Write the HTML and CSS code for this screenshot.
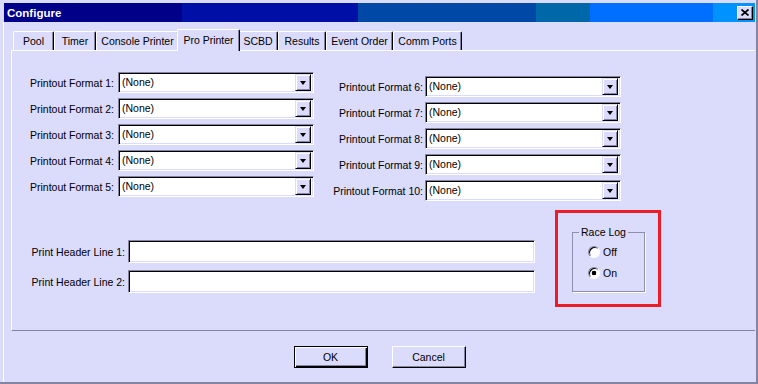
FILE: index.html
```html
<!DOCTYPE html>
<html lang="en">
<head>
<meta charset="UTF-8">
<title>Configure</title>
<link rel="stylesheet" href="styles.css">
</head>
<body>
<div class="window">
    <div class="titlebar">
        <span class="title">Configure</span>
        <button class="close-btn" aria-label="Close">
            <svg width="8" height="7" viewBox="0 0 8 7"><path d="M0.5 0.5 L7.5 6.5 M7.5 0.5 L0.5 6.5" stroke="#000" stroke-width="1.7" fill="none"/></svg>
        </button>
    </div>
    <div class="client">
        <ul class="tabs">
            <li class="tab">Pool</li>
            <li class="tab">Timer</li>
            <li class="tab">Console Printer</li>
            <li class="tab active">Pro Printer</li>
            <li class="tab">SCBD</li>
            <li class="tab">Results</li>
            <li class="tab">Event Order</li>
            <li class="tab">Comm Ports</li>
        </ul>
        <div class="panel">
            <div class="formats">
                <div class="fmt-col">
                    <label>Printout Format 1:</label>
                    <div class="combo"><span class="combo-text">(None)</span><span class="drop"></span></div>
                    <label>Printout Format 2:</label>
                    <div class="combo"><span class="combo-text">(None)</span><span class="drop"></span></div>
                    <label>Printout Format 3:</label>
                    <div class="combo"><span class="combo-text">(None)</span><span class="drop"></span></div>
                    <label>Printout Format 4:</label>
                    <div class="combo"><span class="combo-text">(None)</span><span class="drop"></span></div>
                    <label>Printout Format 5:</label>
                    <div class="combo"><span class="combo-text">(None)</span><span class="drop"></span></div>
                </div>
                <div class="fmt-col right">
                    <label>Printout Format 6:</label>
                    <div class="combo"><span class="combo-text">(None)</span><span class="drop"></span></div>
                    <label>Printout Format 7:</label>
                    <div class="combo"><span class="combo-text">(None)</span><span class="drop"></span></div>
                    <label>Printout Format 8:</label>
                    <div class="combo"><span class="combo-text">(None)</span><span class="drop"></span></div>
                    <label>Printout Format 9:</label>
                    <div class="combo"><span class="combo-text">(None)</span><span class="drop"></span></div>
                    <label>Printout Format 10:</label>
                    <div class="combo"><span class="combo-text">(None)</span><span class="drop"></span></div>
                </div>
            </div>
            <div class="lower">
                <div class="headers">
                    <label>Print Header Line 1:</label>
                    <div class="textbox"></div>
                    <label>Print Header Line 2:</label>
                    <div class="textbox"></div>
                </div>
                <div class="highlight">
                    <fieldset class="group">
                        <legend>Race Log</legend>
                        <div class="radio"><span class="circle"></span>Off</div>
                        <div class="radio"><span class="circle checked"></span>On</div>
                    </fieldset>
                </div>
            </div>
        </div>
        <div class="buttons">
            <button class="btn default">OK</button>
            <button class="btn">Cancel</button>
        </div>
    </div>
</div>
</body>
</html>
```

FILE: styles.css
```css
* {
    box-sizing: border-box;
}
body {
    margin: 0;
    background-color: #dbdbfb; /* dialog face */
    font-family: "Liberation Sans", Arial, sans-serif;
    font-size: 10.5px;
    color: #000;
}
.window {
    width: 758px;
    height: 384px;
    padding: 3px 1px 0 3px;
    border-right: 2px solid #8585a2;
    border-bottom: 2px solid #8585a2;
    display: flex;
    flex-direction: column;
}

/* title bar */
.titlebar {
    height: 19px;
    margin-left: 1px;
    padding: 0 2px 0 3px;
    display: flex;
    align-items: center;
    justify-content: space-between;
    background: linear-gradient(to right,
        #000088 0 178px,
        #0010a6 178px 354px,
        #0048a6 354px 532px,
        #0068a8 532px 586px,
        #006eff 586px 709px,
        #0092ff 709px);
}
.title {
    color: #fff;
    font-weight: bold;
    font-size: 11.5px;
}
.close-btn {
    width: 16px;
    height: 14px;
    padding: 0;
    background: #dbdbfb;
    border: 1px solid;
    border-color: #fff #000 #000 #fff;
    box-shadow: inset -1px -1px #8585a2;
    display: flex;
    align-items: center;
    justify-content: center;
}

/* client area */
.client {
    flex: 1;
    border-left: 1px solid #fff;
    display: flex;
    flex-direction: column;
}
.tabs {
    list-style: none;
    margin: 7px 0 0;
    padding: 0 0 0 9px;
    height: 21px;
    display: grid;
    grid-template-columns: 41px 42px 83px 59px 40px 48px 67px 69px;
    align-items: end;
}
.tab {
    height: 19px;
    line-height: 18px;
    text-align: center;
    white-space: nowrap;
    border-top: 1px solid #fff;
    border-left: 1px solid #fff;
    border-right: 1px solid #000;
    border-radius: 2px 2px 0 0;
    box-shadow: inset -1px 0 #8585a2;
}
.tab.active {
    position: relative;
    z-index: 1;
    height: 22px;
    line-height: 20px;
    margin: 0 -2px -1px;
    background: #dbdbfb;
}
.panel {
    height: 281px;
    margin-left: 7px;
    border-top: 1px solid #fff;
    border-left: 1px solid #fff;
    border-bottom: 1px solid #8585a2;
    padding-top: 21px;
}

/* printout formats */
.formats {
    display: flex;
    align-items: flex-start;
    padding-left: 2px;
}
.fmt-col {
    display: grid;
    grid-template-columns: 100px 196px;
    grid-auto-rows: 21px;
    column-gap: 4px;
    row-gap: 5px;
    align-items: center;
}
.fmt-col.right {
    margin: 4px 0 0 1px;
    grid-template-columns: 108px 196px;
    column-gap: 2px;
}
.fmt-col label,
.headers label {
    text-align: right;
    white-space: nowrap;
}
.combo,
.textbox {
    height: 21px;
    background: #fff;
    border: 1px solid;
    border-color: #8585a2 #fff #fff #8585a2;
    box-shadow: inset 1px 1px #000, inset -1px -1px #dbdbfb;
}
.combo {
    display: flex;
    padding: 1px 2px 1px 2px;
}
.combo-text {
    flex: 1;
    padding-left: 1px;
    line-height: 17px;
}
.drop {
    width: 16px;
    height: 17px;
    background: #dbdbfb;
    border: 1px solid;
    border-color: #dbdbfb #000 #000 #dbdbfb;
    box-shadow: inset 1px 1px #fff, inset -1px -1px #8585a2;
    display: flex;
    align-items: center;
    justify-content: center;
}
.drop::after {
    content: "";
    border-left: 3.5px solid transparent;
    border-right: 3.5px solid transparent;
    border-top: 4px solid #000;
}

/* header lines and race log */
.lower {
    display: flex;
    align-items: flex-start;
    margin-top: 9px;
}
.headers {
    margin-top: 30px;
    padding-left: 13px;
    display: grid;
    grid-template-columns: 100px 407px;
    grid-auto-rows: 23px;
    column-gap: 3px;
    row-gap: 7px;
    align-items: center;
}
.textbox {
    height: 23px;
}
.highlight {
    width: 106px;
    height: 97px;
    margin-left: 20px;
    border: 3px solid #ec1c24; /* red marker */
}
.group {
    width: 73px;
    height: 66px;
    margin: 13px 0 0 14px;
    padding: 3px 0 0;
    min-width: 0;
    border: 1px solid #8f8fac;
    box-shadow: 1px 1px 0 #fff;
}
.group legend {
    margin-left: 6px;
    padding: 0 2px;
    line-height: 12px;
}
.radio {
    height: 21px;
    padding-left: 15px;
    display: flex;
    align-items: center;
    gap: 3px;
}
.circle {
    width: 12px;
    height: 12px;
    border-radius: 50%;
    border: 1px solid;
    border-color: #8585a2 #fff #fff #8585a2;
    box-shadow: inset 1px 1px #000;
    background: #fff;
}
.circle.checked {
    background: radial-gradient(circle, #000 0 2px, #fff 2.6px);
}

/* dialog buttons */
.buttons {
    margin-top: 15px;
    display: flex;
    justify-content: center;
    gap: 24px;
}
.btn {
    width: 74px;
    height: 22px;
    padding: 0;
    font-family: "Liberation Sans", Arial, sans-serif;
    font-size: 10.5px;
    color: #000;
    background: #dbdbfb;
    border: 1px solid;
    border-color: #fff #000 #000 #fff;
    box-shadow: inset -1px -1px #8585a2;
}
.btn.default {
    border-color: #000;
    box-shadow: inset 1px 1px #fff, inset -1px -1px #000, inset -2px -2px #8585a2;
}
```
